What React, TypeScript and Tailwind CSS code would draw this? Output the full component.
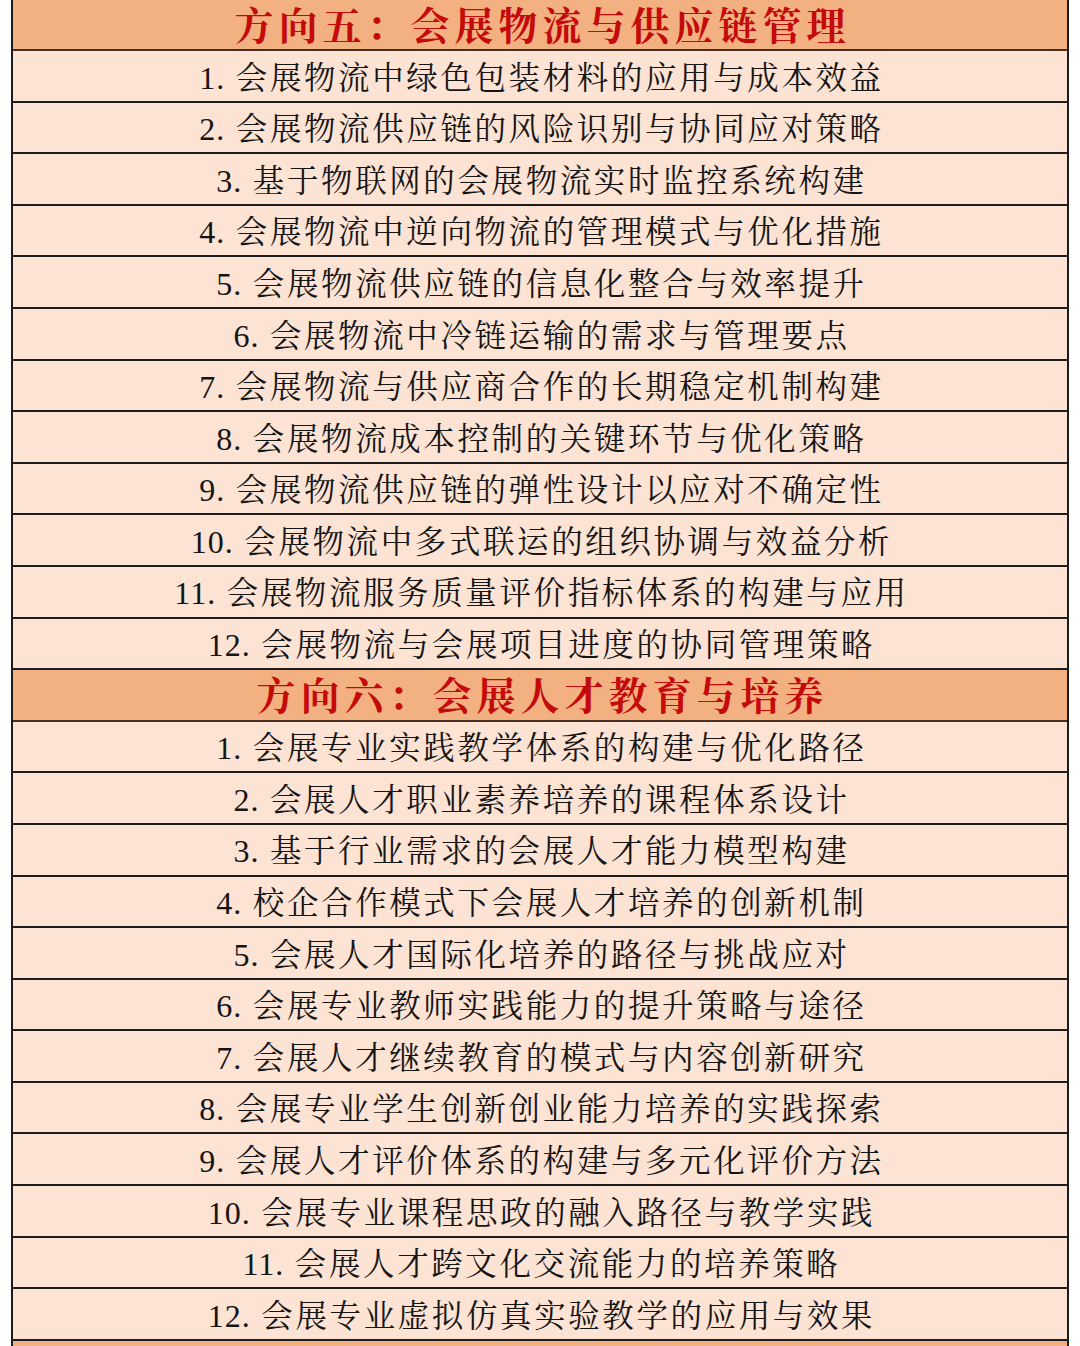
import React from 'react'

const sections = [
  {
    title: '方向五：会展物流与供应链管理',
    items: [
      '会展物流中绿色包装材料的应用与成本效益',
      '会展物流供应链的风险识别与协同应对策略',
      '基于物联网的会展物流实时监控系统构建',
      '会展物流中逆向物流的管理模式与优化措施',
      '会展物流供应链的信息化整合与效率提升',
      '会展物流中冷链运输的需求与管理要点',
      '会展物流与供应商合作的长期稳定机制构建',
      '会展物流成本控制的关键环节与优化策略',
      '会展物流供应链的弹性设计以应对不确定性',
      '会展物流中多式联运的组织协调与效益分析',
      '会展物流服务质量评价指标体系的构建与应用',
      '会展物流与会展项目进度的协同管理策略',
    ],
  },
  {
    title: '方向六：会展人才教育与培养',
    items: [
      '会展专业实践教学体系的构建与优化路径',
      '会展人才职业素养培养的课程体系设计',
      '基于行业需求的会展人才能力模型构建',
      '校企合作模式下会展人才培养的创新机制',
      '会展人才国际化培养的路径与挑战应对',
      '会展专业教师实践能力的提升策略与途径',
      '会展人才继续教育的模式与内容创新研究',
      '会展专业学生创新创业能力培养的实践探索',
      '会展人才评价体系的构建与多元化评价方法',
      '会展专业课程思政的融入路径与教学实践',
      '会展人才跨文化交流能力的培养策略',
      '会展专业虚拟仿真实验教学的应用与效果',
    ],
  },
]

const font = { fontFamily: '"Liberation Serif", "Noto Serif CJK SC", "Noto Sans CJK SC", serif' }

function HeaderRow({ title, first }: { title: string; first?: boolean }) {
  return (
    <div
      className={`${first ? 'h-[51px]' : 'h-[51.6px]'} bg-[#f3b182] border-b-2 border-[#4a2e22] flex items-center justify-center pt-[3px]`}
    >
      <span className="text-[39px] leading-none font-bold text-[#c40a0a] tracking-[5px] pl-[5px]">{title}</span>
    </div>
  )
}

function ItemRow({ n, text }: { n: number; text: string }) {
  return (
    <div className="h-[51.6px] bg-[#fce3d4] border-b-2 border-[#1c1c1c] flex items-center justify-center pt-[4px]">
      <span className="text-[31.5px] leading-none text-[#151515] tracking-[2.6px] pl-[3px] whitespace-nowrap">
        <span className="tracking-[1px] text-[32px]">{n}.</span> {text}
      </span>
    </div>
  )
}

export default function App() {
  return (
    <div className="w-[1080px] h-[1346px] overflow-hidden bg-white" style={font}>
      <div className="ml-[11px] w-[1058px] border-x-2 border-[#1c1c1c]">
        {sections.map((s, si) => (
          <div key={si}>
            <HeaderRow title={s.title} first={si === 0} />
            {s.items.map((it, i) => (
              <ItemRow key={i} n={i + 1} text={it} />
            ))}
          </div>
        ))}
        <div className="h-[51.6px] bg-[#f3b182]" />
      </div>
    </div>
  )
}
